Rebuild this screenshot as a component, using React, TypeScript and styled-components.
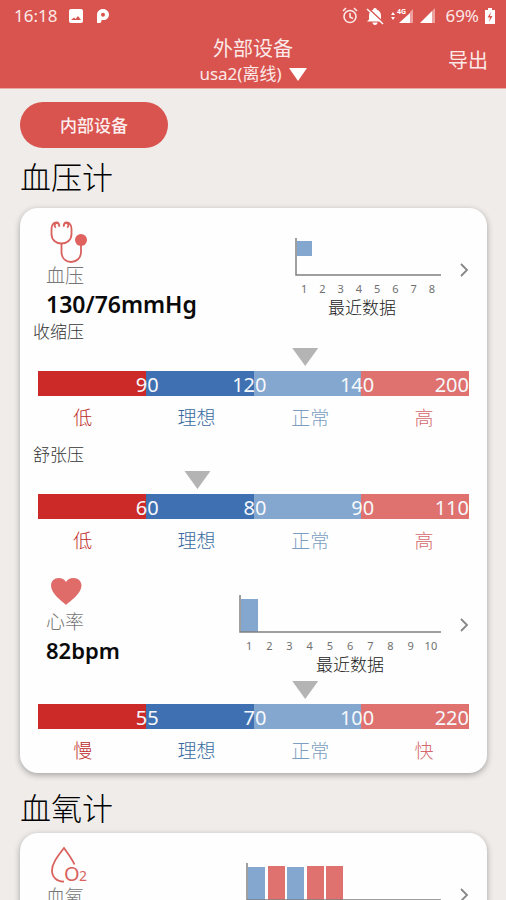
import React from "react";
import styled, { createGlobalStyle } from "styled-components";

const color = {
  brand: "#d9534f",
  page: "#efecea",
  deepRed: "#cc2a29",
  deepBlue: "#3e70b2",
  softBlue: "#83a7cf",
  softRed: "#df716e",
  marker: "#b4b4b4",
  axis: "#808080",
};

const GlobalStyle = createGlobalStyle`
  *, *::before, *::after { box-sizing: border-box; }
  body {
    margin: 0;
    background: ${color.page};
    font-family: "Noto Sans", "Noto Sans CJK SC", sans-serif;
    color: #111;
  }
  button {
    font: inherit;
    color: inherit;
    background: none;
    border: 0;
    padding: 0;
    cursor: pointer;
  }
  h1, h2, h3, p, figure { margin: 0; font-weight: 400; }
`;

const Screen = styled.div`
  height: 100vh;
  display: flex;
  flex-direction: column;
  overflow: hidden;
`;

const TopArea = styled.div`
  flex: none;
  background: ${color.brand};
  color: #fbe9e7;
  border-bottom: 1px solid #e9a9a5;
`;

const StatusBar = styled.div`
  display: flex;
  align-items: center;
  justify-content: space-between;
  height: 32px;
  padding: 0 10px 0 14px;
  font-size: 17px;
  line-height: 24px;
`;

const StatusGroup = styled.div<{ $gap: number }>`
  display: flex;
  align-items: center;
  gap: ${(p) => p.$gap}px;
`;

const AppBar = styled.header`
  display: grid;
  grid-template-columns: 1fr auto 1fr;
  align-items: center;
  padding: 4px 18px 2px;
`;

const TitleBlock = styled.div`
  grid-column: 2;
  display: flex;
  flex-direction: column;
  align-items: center;
`;

const Title = styled.h1`
  font-size: 20px;
  line-height: 26px;
`;

const DevicePicker = styled.button`
  display: flex;
  align-items: center;
  gap: 7px;
  font-size: 17px;
  line-height: 24px;
`;

const ExportButton = styled.button`
  justify-self: end;
  font-size: 20px;
  line-height: 24px;
`;

const Content = styled.main`
  flex: 1;
  min-height: 0;
  overflow-y: auto;
  scrollbar-width: none;
  padding: 13px 19px 20px 20px;
`;

const PillButton = styled.button`
  display: block;
  min-width: 148px;
  padding: 12px 20px 10px;
  border-radius: 24px;
  background: ${color.brand};
  color: #fdeeed;
  font-size: 17px;
  line-height: 24px;
  font-weight: 500;
`;

const SectionTitle = styled.h2<{ $afterCard?: boolean }>`
  padding: ${(p) => (p.$afterCard ? "13px 0 3px" : "7px 0 9px")};
  font-size: 31px;
  line-height: 44px;
  font-weight: 300;
  color: #000;
`;

const Card = styled.section`
  padding: 11px 18px 10px;
  border-radius: 18px;
  background: #fefefe;
  box-shadow: 0 2px 6px rgba(0, 0, 0, 0.32);
`;

const Summary = styled.div`
  display: grid;
  grid-template-columns: 1fr auto 10px;
  column-gap: 18px;
  padding-left: 8px;

  * + & {
    margin: 19px 0 4px;
  }
`;

const Reading = styled.div`
  display: flex;
  flex-direction: column;
  white-space: nowrap;
`;

const IconSlot = styled.div<{ $height: number }>`
  display: flex;
  align-items: center;
  height: ${(p) => p.$height}px;
  padding-left: 4px;
`;

const ReadingName = styled.h3`
  font-size: 19px;
  line-height: 24px;
  font-weight: 300;
  color: #777;
`;

const ReadingValue = styled.p<{ $large?: boolean }>`
  font-size: ${(p) => (p.$large ? 23 : 22)}px;
  line-height: 32px;
  font-weight: 600;
  color: #0a0a0a;
`;

const Trend = styled.figure<{ $drop: number }>`
  align-self: start;
  padding-top: ${(p) => p.$drop}px;
`;

const TrendPlot = styled.svg`
  display: block;
`;

const TrendTicks = styled.div<{ $count: number }>`
  display: grid;
  grid-template-columns: repeat(${(p) => p.$count}, 1fr);
  padding-top: 5px;
  text-align: center;
  font-size: 11px;
  line-height: 15px;
  color: #707070;
`;

const TrendCaption = styled.figcaption<{ $shift: "left" | "right" }>`
  padding: ${(p) => (p.$shift === "left" ? "0 12px 0 0" : "0 0 0 20px")};
  text-align: center;
  font-size: 17px;
  line-height: 24px;
  font-weight: 300;
  color: #222;
`;

const MoreButton = styled.button`
  align-self: center;
  display: flex;
`;

const ScaleName = styled.h3`
  margin-left: -5px;
  font-size: 17px;
  line-height: 24px;
  font-weight: 300;
  color: #333;
`;

const Scale = styled.div<{ $followed?: boolean }>`
  margin-bottom: ${(p) => (p.$followed ? "13px" : "0")};
`;

const PointerTrack = styled.div<{ $tight?: boolean }>`
  padding: ${(p) => (p.$tight ? "0 0 5px" : "4px 0 5px")};
`;

const Pointer = styled.div`
  width: 26px;
  height: 18px;
  background: ${color.marker};
  clip-path: polygon(0 0, 100% 0, 50% 100%);
`;

const ScaleBar = styled.div`
  display: grid;
  grid-template-columns: repeat(4, 1fr);
  font-size: 20px;
  line-height: 27px;
  color: #f6f8fb;
`;

const Zone = styled.div<{ $fill: string }>`
  display: flex;
  justify-content: flex-end;
  height: 25px;
  background: ${(p) => p.$fill};
`;

const Limit = styled.span`
  position: relative;
  z-index: 1;
  margin-right: -13px;

  ${Zone}:last-child & {
    margin-right: 0;
  }
`;

const ZoneNames = styled.div`
  display: grid;
  grid-template-columns: repeat(4, 1fr);
  margin: 0 -12px;
  padding-top: 10px;
  text-align: center;
  font-size: 19px;
  line-height: 24px;
  font-weight: 300;
`;

const ZoneName = styled.span<{ $ink: string }>`
  color: ${(p) => p.$ink};
`;

const ZONES = [
  { fill: color.deepRed, ink: "#bf2b2b" },
  { fill: color.deepBlue, ink: "#386a9f" },
  { fill: color.softBlue, ink: "#7b9dbf" },
  { fill: color.softRed, ink: "#d4686c" },
];

interface RangeScaleProps {
  limits: number[];
  names: string[];
  position: number;
  followed?: boolean;
  tight?: boolean;
}

function RangeScale({ limits, names, position, followed, tight }: RangeScaleProps) {
  return (
    <Scale $followed={followed}>
      <PointerTrack $tight={tight}>
        <Pointer style={{ marginLeft: `calc(${position}% - 13px)` }} />
      </PointerTrack>
      <ScaleBar>
        {ZONES.map((zone, i) => (
          <Zone key={zone.fill} $fill={zone.fill}>
            <Limit>{limits[i]}</Limit>
          </Zone>
        ))}
      </ScaleBar>
      <ZoneNames>
        {ZONES.map((zone, i) => (
          <ZoneName key={zone.ink} $ink={zone.ink}>
            {names[i]}
          </ZoneName>
        ))}
      </ZoneNames>
    </Scale>
  );
}

interface Bar {
  top: number;
  bottom: number;
  fill: string;
}

interface TrendChartProps {
  width: number;
  slots: number;
  bars: Bar[];
  shift: "left" | "right";
  drop?: number;
}

function TrendChart({ width, slots, bars, shift, drop = 19 }: TrendChartProps) {
  const step = width / slots;
  return (
    <Trend $drop={drop}>
      <TrendPlot width={width} height={38} viewBox={`0 0 ${width} 38`} aria-hidden="true">
        {bars.map((bar, i) => (
          <rect
            key={i}
            x={Math.round(2 + i * step)}
            y={bar.top}
            width={Math.round(step - 3)}
            height={bar.bottom - bar.top}
            fill={bar.fill}
          />
        ))}
        <path d={`M1 0V37H${width}`} fill="none" stroke={color.axis} strokeWidth="1.5" />
      </TrendPlot>
      <TrendTicks $count={slots}>
        {Array.from({ length: slots }, (_, i) => (
          <span key={i}>{i + 1}</span>
        ))}
      </TrendTicks>
      <TrendCaption $shift={shift}>最近数据</TrendCaption>
    </Trend>
  );
}

function More({ label }: { label: string }) {
  return (
    <MoreButton aria-label={label}>
      <svg width="10" height="14" viewBox="0 0 10 14">
        <path d="M2 1l6 6-6 6" fill="none" stroke="#868686" strokeWidth="1.8" />
      </svg>
    </MoreButton>
  );
}

function Stethoscope() {
  return (
    <svg width="38" height="42" viewBox="0 0 38 42" aria-hidden="true">
      <g fill="none" stroke="#d9625f" strokeWidth="1.8">
        <path d="M9 5.500A2.300 2.300 0 1 0 6 6.500M9 5.500Q9.500 1.500 6.500 1.500C3 1.500 1.500 4.500 1.500 8V13C1.500 19 6 22.500 11.500 22.500S21.500 19 21.500 13V8C21.500 4.500 20 1.500 16.500 1.500Q13.500 1.500 14 5.500M14 5.500A2.300 2.300 0 1 1 17 6.500" />
        <path d="M11.500 22.500V31C11.500 37 15.500 41 21 41S31 37 31 31V24" />
      </g>
      <circle cx="31" cy="19" r="6" fill="#df625f" />
    </svg>
  );
}

function Heart() {
  return (
    <svg width="32" height="28" viewBox="0 0 32 28" aria-hidden="true">
      <path
        d="M16 28C12 24 1 17 1 8.500C1 4 4.500 1 8.500 1C12 1 14.500 2.500 16 5C17.500 2.500 20 1 23.500 1C28 1 31.500 4 31.500 8.500C31.500 17 20 24 16 28Z"
        fill="#df6c69"
      />
    </svg>
  );
}

const OxygenIcon = styled.svg`
  overflow: visible;
`;

const OxygenText = styled.text`
  font-family: "Noto Sans", sans-serif;
  fill: #d9625f;
`;

function OxygenDrop() {
  return (
    <OxygenIcon width="38" height="38" viewBox="0 0 38 38" aria-hidden="true">
      <path
        d="M14 35.500C7 36 2 31 2 24.500C2 17 8 10 14 2C18 7.500 22 13 24.500 18.500"
        fill="none"
        stroke="#d9625f"
        strokeWidth="1.8"
      />
      <OxygenText x="14" y="35" fontSize="20">O</OxygenText>
      <OxygenText x="29" y="35" fontSize="14">2</OxygenText>
    </OxygenIcon>
  );
}

const StatusIcons = styled.svg`
  overflow: visible;
`;

function AlertIcons() {
  return (
    <StatusIcons width="98" height="20" viewBox="0 0 98 20" aria-hidden="true">
      <g fill="none" stroke="#fbe9e7" strokeWidth="1.6">
        <circle cx="8" cy="10.500" r="6" />
        <path d="M8 7v4l3 1.500M1 5l3-3M15 5l-3-3" />
      </g>
      <g fill="#fff">
        <path d="M33 2C34.200 2 34.800 2.700 34.800 3.800C37.500 4.500 39 7 39 9.500V13.500L41 15.500H25L27 13.500V9.500C27 7 28.500 4.500 31.200 3.800C31.200 2.700 31.800 2 33 2ZM30.500 16.500H35.500C35.500 18 34.500 19 33 19S30.500 18 30.500 16.500Z" />
        <path d="M49 9l2-3 2 3zM49 11l2 3 2-3z" />
        <path d="M57 17L68 7V17z" />
        <path d="M78 17L90 5V17z" />
      </g>
      <path d="M26 2L42 17" stroke={color.brand} strokeWidth="1.6" />
      <path d="M25 3L41 18" stroke="#fff" strokeWidth="1.4" />
      <path d="M68 6l3-3V17H68zM90 5l3-3V17H90z" fill="#eda19e" />
      <text x="55" y="8" fontSize="7" fontWeight="700" fill="#fff">4G</text>
    </StatusIcons>
  );
}

export default function App() {
  return (
    <Screen>
      <GlobalStyle />
      <TopArea>
        <StatusBar>
          <StatusGroup $gap={12}>
            <span>16:18</span>
            <svg width="42" height="16" viewBox="0 0 42 16" aria-hidden="true">
              <path
                fillRule="evenodd"
                fill="#fff"
                d="M2 1H12Q14 1 14 3V13Q14 15 12 15H2Q0 15 0 13V3Q0 1 2 1ZM2 12H12L9 8L6.500 11L5 9.500Z"
              />
              <path
                fillRule="evenodd"
                fill="#fff"
                d="M28 15V7C28 3.500 30.500 1 34 1C37.500 1 40 3.500 40 6.500C40 10 37.500 12 34.500 12H32.500V13Q32.500 15 30.500 15ZM34 4.700A2 2 0 1 0 34 8.700A2 2 0 1 0 34 4.700Z"
              />
            </svg>
          </StatusGroup>
          <StatusGroup $gap={5}>
            <AlertIcons />
            <span>69%</span>
            <svg width="12" height="16" viewBox="0 0 12 16" aria-hidden="true">
              <path d="M4 0H8V2H11V16H1V2H4Z" fill="#fff" />
              <path d="M7 4L3.500 9.500H6L5 14L8.500 8H6Z" fill={color.brand} />
            </svg>
          </StatusGroup>
        </StatusBar>
        <AppBar>
          <TitleBlock>
            <Title>外部设备</Title>
            <DevicePicker aria-haspopup="listbox">
              usa2(离线)
              <svg width="18" height="13" viewBox="0 0 18 13" aria-hidden="true">
                <path d="M0 0H18L9 13Z" fill="#fff" />
              </svg>
            </DevicePicker>
          </TitleBlock>
          <ExportButton>导出</ExportButton>
        </AppBar>
      </TopArea>

      <Content>
        <PillButton>内部设备</PillButton>

        <SectionTitle>血压计</SectionTitle>
        <Card>
          <Summary>
            <Reading>
              <IconSlot $height={45}>
                <Stethoscope />
              </IconSlot>
              <ReadingName>血压</ReadingName>
              <ReadingValue $large>130/76mmHg</ReadingValue>
            </Reading>
            <TrendChart
              width={146}
              slots={8}
              shift="left"
              bars={[{ top: 3, bottom: 18, fill: color.softBlue }]}
            />
            <More label="血压" />
          </Summary>
          <ScaleName>收缩压</ScaleName>
          <RangeScale
            limits={[90, 120, 140, 200]}
            names={["低", "理想", "正常", "高"]}
            position={62}
            followed
          />
          <ScaleName>舒张压</ScaleName>
          <RangeScale
            limits={[60, 80, 90, 110]}
            names={["低", "理想", "正常", "高"]}
            position={37}
          />
          <Summary>
            <Reading>
              <IconSlot $height={38}>
                <Heart />
              </IconSlot>
              <ReadingName>心率</ReadingName>
              <ReadingValue>82bpm</ReadingValue>
            </Reading>
            <TrendChart
              width={202}
              slots={10}
              shift="right"
              drop={23}
              bars={[{ top: 4, bottom: 37, fill: color.softBlue }]}
            />
            <More label="心率" />
          </Summary>
          <RangeScale
            limits={[55, 70, 100, 220]}
            names={["慢", "理想", "正常", "快"]}
            position={62}
            tight
          />
        </Card>

        <SectionTitle $afterCard>血氧计</SectionTitle>
        <Card>
          <Summary>
            <Reading>
              <IconSlot $height={41}>
                <OxygenDrop />
              </IconSlot>
              <ReadingName>血氧</ReadingName>
              <ReadingValue>98%</ReadingValue>
            </Reading>
            <TrendChart
              width={195}
              slots={10}
              shift="right"
              bars={[
                { top: 4, bottom: 37, fill: color.softBlue },
                { top: 3, bottom: 37, fill: color.softRed },
                { top: 4, bottom: 37, fill: color.softBlue },
                { top: 3, bottom: 37, fill: color.softRed },
                { top: 3, bottom: 37, fill: color.softRed },
              ]}
            />
            <More label="血氧" />
          </Summary>
        </Card>
      </Content>
    </Screen>
  );
}
